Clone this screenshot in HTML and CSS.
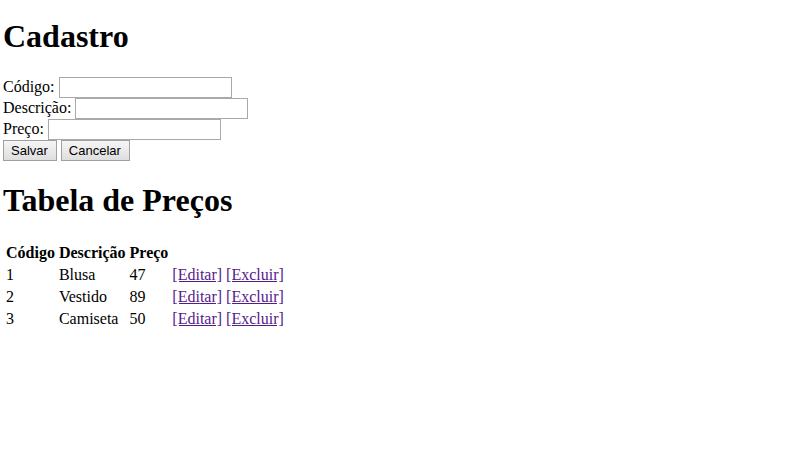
FILE: index.html
```html
<!DOCTYPE html>
<html lang="pt-BR">
<head>
<meta charset="utf-8">
<title>Cadastro</title>
<link rel="stylesheet" href="styles.css">
</head>
<body>
<h1>Cadastro</h1>
<form>
<div class="field"><label for="codigo">Código:</label> <input type="text" id="codigo"></div>
<div class="field"><label for="descricao">Descrição:</label> <input type="text" id="descricao"></div>
<div class="field"><label for="preco">Preço:</label> <input type="text" id="preco"></div>
<div class="actions"><button type="button">Salvar</button> <button type="button">Cancelar</button></div>
</form>
<h1>Tabela de Preços</h1>
<table>
<thead>
<tr><th>Código</th><th>Descrição</th><th>Preço</th><td></td></tr>
</thead>
<tbody>
<tr><td>1</td><td>Blusa</td><td>47</td><td><a href="#">[Editar]</a> <a href="#">[Excluir]</a></td></tr>
<tr><td>2</td><td>Vestido</td><td>89</td><td><a href="#">[Editar]</a> <a href="#">[Excluir]</a></td></tr>
<tr><td>3</td><td>Camiseta</td><td>50</td><td><a href="#">[Editar]</a> <a href="#">[Excluir]</a></td></tr>
</tbody>
</table>
</body>
</html>
```
FILE: styles.css
```css
body {
  margin: 0 3px;
  padding-top: 17px;
  background: #fff;
  color: #000;
  font: 16px/18px "Liberation Serif", "Times New Roman", serif;
}

h1 {
  margin: 0 0 22px;
  font-size: 32px;
  line-height: 38px;
}

form {
  margin-bottom: 20px;
}

.field {
  display: flex;
  align-items: flex-start;
  gap: 4px;
}

label {
  line-height: 20px;
}

input {
  box-sizing: border-box;
  width: 173px;
  height: 21px;
  padding: 1px;
  border: 1px solid #a9a9a9;
  border-radius: 0;
  background: #fff;
  font: 13px "Liberation Sans", Arial, sans-serif;
}

.actions {
  display: flex;
  gap: 4px;
}

button {
  box-sizing: border-box;
  height: 21px;
  padding: 0 8px 0 7px;
  border: 1px solid #a0a0a0;
  border-radius: 0;
  background: linear-gradient(#f6f6f6, #dedede);
  color: #000;
  font: 13px "Liberation Sans", Arial, sans-serif;
}

table {
  border-collapse: separate;
  border-spacing: 2px;
}

th,
td {
  padding: 1px;
  text-align: left;
}

a {
  color: #551a8b;
  text-decoration: underline;
}
```
